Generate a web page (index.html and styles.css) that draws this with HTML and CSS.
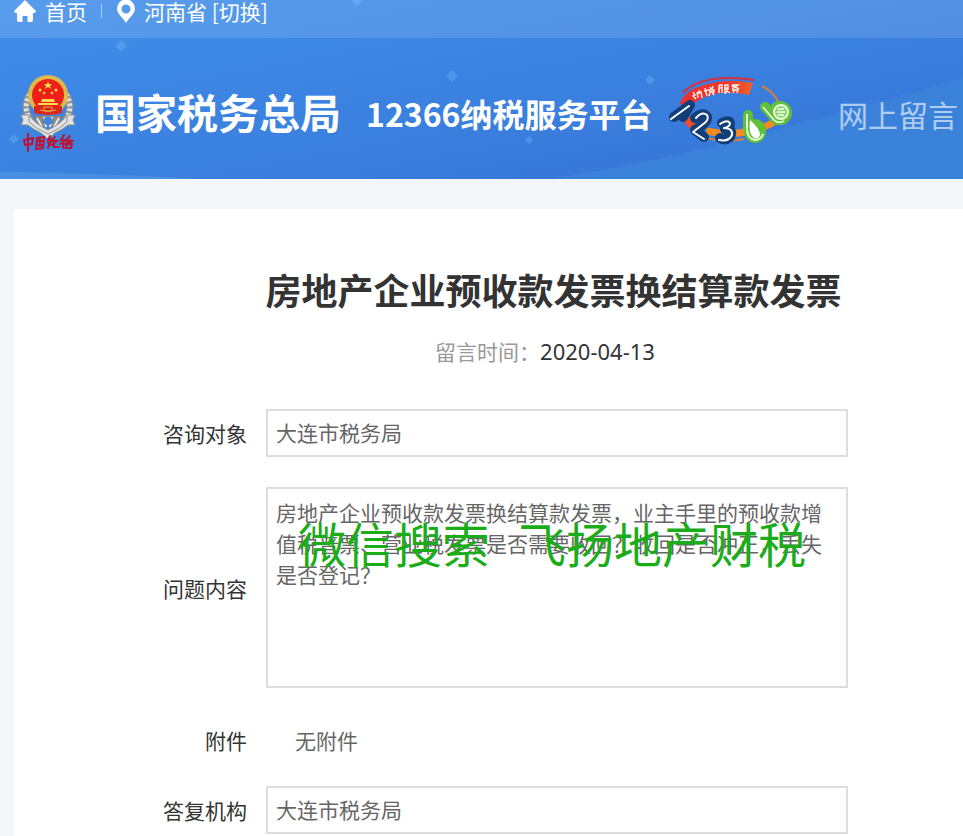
FILE: index.html
```html
<!DOCTYPE html>
<html lang="zh-CN">
<head>
  <meta charset="UTF-8">
  <meta name="viewport" content="width=device-width, initial-scale=1.0">
  <title>12366纳税服务平台 - 网上留言</title>
  <link rel="stylesheet" href="styles.css">
</head>
<body>
  <header class="header">
    <svg class="header-bg" viewBox="0 0 963 179" preserveAspectRatio="none" aria-hidden="true">
      <defs>
        <linearGradient id="sky" x1="0" y1="0" x2="1" y2="1">
          <stop offset="0" stop-color="#418fea"/>
          <stop offset="0.6" stop-color="#3a7fde"/>
          <stop offset="1" stop-color="#3470d4"/>
        </linearGradient>
      </defs>
      <rect width="963" height="179" fill="url(#sky)"/>
      <path d="M0 172 Q120 174 200 179 H0Z" fill="#4a90e2"/>
      <path d="M550 179 Q680 158 790 126 L963 78 V179Z" fill="#3a81d9"/>
      <g fill="#6cb2f5" opacity="0.4">
        <path d="M121 40l6 6-6 6-6-6z"/>
        <path d="M452 70l6 6-6 6-6-6z"/>
        <path d="M650 75l5 5-5 5-5-5z"/>
        <path d="M529 136l4 4-4 4-4-4z"/>
        <path d="M14 134l5 5-5 5-5-5z"/>
        <path d="M357 -4l5 5-5 5-5-5z"/>
      </g>
    </svg>
    <div class="topbar">
      <a class="top-link" href="#">
        <svg width="22" height="22" viewBox="0 0 22 22" fill="#fff" aria-hidden="true">
          <path d="M11 0L22 11Q22 13 20 13H19V20Q19 22 17 22H13.500V16H8.500V22H5Q3 22 3 20V13H2Q0 13 0 11Z"/>
        </svg>
        首页
      </a>
      <span class="divider"></span>
      <div class="place">
        <svg width="18" height="23" viewBox="0 0 18 23" fill="#fff" fill-rule="evenodd" aria-hidden="true">
          <path d="M9 23C7 19 0 14 0 8.500A9 9 0 0 1 18 8.500C18 14 11 19 9 23ZM9 4.500A4.500 4.500 0 1 0 9 13.500A4.500 4.500 0 1 0 9 4.500Z"/>
        </svg>
        <span>河南省 <a href="#">[切换]</a></span>
      </div>
    </div>
    <div class="banner">
      <svg class="emblem" width="56" height="78" viewBox="0 0 56 78" role="img" aria-label="中国税务">
        <g fill="none" stroke="#8f8f91" stroke-width="7">
          <path d="M10 20C1 35 9 50 22 55M46 20C55 35 47 50 34 55"/>
        </g>
        <g fill="none" stroke="#dfdedb" stroke-width="5" stroke-dasharray="3 2">
          <path d="M10 20C1 35 9 50 22 55M46 20C55 35 47 50 34 55"/>
        </g>
        <path d="M14 42h28l-5 10H19z" fill="#8c8681"/>
        <path d="M17 44l5 9M24 43l2 10M32 43l-2 10M39 44l-5 9" stroke="#eeebe6" stroke-width="2"/>
        <circle cx="28" cy="21" r="20" fill="#dfb94a"/>
        <circle cx="28" cy="21" r="16" fill="#ed2018"/>
        <path d="M14 32h28v7q-14 4-28 0z" fill="#d72a1c"/>
        <path d="M28 7l1 3h3l-2 2 1 3-3-2-3 2 1-3-2-2h3z" fill="#ffd84c"/>
        <g fill="#ffd84c">
          <circle cx="20" cy="16" r="1.500"/><circle cx="36" cy="16" r="1.500"/>
          <circle cx="24" cy="19" r="1.300"/><circle cx="32" cy="19" r="1.300"/>
          <path d="M22 25h12l1 3H21zM18 29h20v2H18z"/>
        </g>
        <path d="M20 36q8 3 16 0M24 33h8v4h-8z" fill="none" stroke="#e5a53a" stroke-width="1"/>
        <ellipse cx="28" cy="47" rx="5" ry="4" fill="#3d86dc"/>
        <path d="M1 41h8q5 8 19 15 14-7 19-15h8l-2 5 2 5h-7q-6 5-13 8l-7 6-7-6q-7-3-13-8H1l2-5z" fill="#e2e2e0" stroke="#838b93" stroke-width="1"/>
        <path d="M9 42v6q7 7 19 12 12-5 19-12v-6" fill="none" stroke="#8c9299" stroke-width="1"/>
        <g fill="none" stroke="#bd1436" stroke-width="2" stroke-linecap="round">
          <path d="M4 66l9-2-1 6-7 1zM8 60v17"/>
          <path d="M17 64l7-1-1 11-7 1zM18 67h4M20 65v7M18 71h4"/>
          <path d="M30 62l-2 4 3-1-3 9M28 69l4 2M35 63l-3 4h5l-4 3M34 67v6h5"/>
          <path d="M44 61l-3 5h5l-6 4M43 66v8M50 62l-4 4 6 1-4 2-4 1M47 70h5l-1 4-4 0M49 67l-4 7"/>
        </g>
      </svg>
      <span class="bureau">国家税务总局</span>
      <span class="platform">12366纳税服务平台</span>
      <svg class="logo" width="124" height="74" viewBox="0 0 124 74" role="img" aria-label="12366">
        <defs>
          <linearGradient id="ribbon">
            <stop offset="0" stop-color="#ee2f2c"/>
            <stop offset="0.7" stop-color="#ee3a2a"/>
            <stop offset="1" stop-color="#f0642a"/>
          </linearGradient>
        </defs>
        <path d="M15 19C27 5 55 1 86 6" fill="none" stroke="#d8303a" stroke-width="2"/>
        <path d="M12 30Q16 17 33 12 57 4 85 9l-4 12Q52 14 31 26L18 34Z" fill="url(#ribbon)"/>
        <path d="M17 33q-2 14 11 21" fill="none" stroke="#ee4a2c" stroke-width="7"/>
        <path d="M38 57q24 5 44 0 22-5 28-13" fill="none" stroke="#f58a20" stroke-width="7"/>
        <path d="M38 64q20 5 38 1M94 12q12 6 16 16" fill="none" stroke="#d98035" stroke-width="2"/>
        <g fill="none" stroke="#ffe9e2" stroke-width="1.500">
          <path d="M25 18l2 3-2 1 3 3M29 18l1 6M29 19l4-1 1 6M31 16l0 4"/>
          <path d="M37 14l2 8M36 17l4-1M42 13l1 2M45 12l-1 3M41 16h5v2h-4zM42 18l-1 4M44 18l2 3"/>
          <path d="M51 11v8M51 11h3v8M51 14h3M57 11h3v3h-3zM57 11v9M57 15h3l-2 4M59 17l3 2"/>
          <path d="M65 10l-1 3M65 11h5l-6 4M65 12l6 3M64 16h6l-1 3M67 15l-2 4"/>
        </g>
        <g fill="none" stroke-linejoin="round" stroke-linecap="round">
          <path d="M6 43l16-12-7 12M27 44q8-7 12-1 1 6-12 13l9 7M54 49q8-4 8 1 0 4-5 5 9 0 5 8-5 4-10 1" stroke="#123f79" stroke-width="10"/>
          <path d="M3 45l18-13M28 44q6-7 11-3 3 5-5 10l-9 7 11 7M52 50q7-5 10-1 0 4-6 5 9 0 8 7-3 7-13 5" stroke="#fff" stroke-width="2"/>
          <path d="M80 41v14M97 33l12 13" stroke="#62c038" stroke-width="10"/>
        </g>
        <ellipse cx="87" cy="57" rx="11" ry="12" fill="#62c038"/>
        <path d="M82 46Q91 54 92 60 91 66 86 64 80 60 82 46Z" fill="#fff"/>
        <path d="M79 40v14q0 11 8 12 6 0 8-6" fill="none" stroke="#e4ffd0" stroke-width="2"/>
        <circle cx="112" cy="39" r="12" fill="#62c038"/>
        <circle cx="113" cy="38" r="7" fill="#91d773" stroke="#e9ffdf" stroke-width="2"/>
        <path d="M110 35h6M109 38h8M110 41h6M95 33l11 13q4 4 10 1" fill="none" stroke="#f0ffe6" stroke-width="1.500"/>
      </svg>
      <a class="section" href="#">网上留言</a>
    </div>
  </header>

  <main class="card">
    <div class="heading">
      <h1>房地产企业预收款发票换结算款发票</h1>
      <p class="meta">留言时间：<time datetime="2020-04-13">2020-04-13</time></p>
    </div>
    <form>
      <div class="row">
        <label for="target">咨询对象</label>
        <input type="text" id="target" value="大连市税务局" readonly>
      </div>
      <div class="row">
        <label for="content">问题内容</label>
        <div class="content-box">
          <textarea id="content" readonly>房地产企业预收款发票换结算款发票，业主手里的预收款增值税普票、营业税发票是否需要收回？收回是否冲正，丢失是否登记？</textarea>
          <div class="watermark"><span>微信搜索</span><span>飞扬地产财税</span></div>
        </div>
      </div>
      <div class="row row-file">
        <label for="file">附件</label>
        <output id="file">无附件</output>
      </div>
      <div class="row">
        <label for="org">答复机构</label>
        <input type="text" id="org" value="大连市税务局" readonly>
      </div>
    </form>
  </main>
</body>
</html>
```
FILE: styles.css
```css
* {
  box-sizing: border-box;
}
body {
  display: flex;
  flex-direction: column;
  min-height: 100vh;
  margin: 0;
  background: #f4f6f8;
  color: #333;
  font-family: "Noto Sans CJK SC", sans-serif;
  font-size: 21px;
}
a {
  color: inherit;
  text-decoration: none;
}
.header {
  position: relative;
  color: #fff;
  overflow: hidden;
}
.header-bg {
  position: absolute;
  inset: 0;
  width: 100%;
  height: 100%;
}
.topbar {
  position: relative;
  display: flex;
  align-items: center;
  height: 38px;
  padding: 0 14px 16px;
  background: rgba(255, 255, 255, 0.12);
  line-height: 22px;
  white-space: nowrap;
}
.top-link,
.place {
  display: flex;
  align-items: center;
  gap: 9px;
}
.divider {
  width: 1px;
  height: 14px;
  margin: 0 15px 0 14px;
  background: rgba(255, 255, 255, 0.5);
}
/* Logo strip */
.banner {
  position: relative;
  display: flex;
  align-items: center;
  height: 141px;
  padding: 0 5px 0 20px;
  font-weight: bold;
  white-space: nowrap;
}
.emblem,
.logo {
  flex: none;
}
.emblem {
  margin-top: 8px;
}
.bureau {
  margin-left: 19px;
  padding-top: 4px;
  font-size: 41px;
}
.platform {
  margin-left: 25px;
  padding-top: 8px;
  font-size: 32px;
}
.logo {
  margin: 4px 0 0 16px;
}
.section {
  margin-left: auto;
  padding-top: 10px;
  font-size: 30px;
  font-weight: normal;
  opacity: 0.6;
}
/* Message card */
.card {
  flex: 1;
  margin: 30px 0 0 14px;
  background: #fff;
}
.heading {
  padding: 54px 0 0 130px;
  text-align: center;
}
h1 {
  margin: 0;
  font-size: 36px;
  line-height: 52px;
}
.meta {
  margin: 20px 0 42px;
  color: #999;
  line-height: 32px;
}
.meta time {
  margin-right: 17px;
  color: #333;
  font-family: "Noto Sans", sans-serif;
  font-size: 22px;
}
form {
  padding-right: 115px;
}
.row {
  display: grid;
  grid-template-columns: 233px 1fr;
  align-items: center;
  gap: 19px;
  margin-bottom: 30px;
}
.row:last-child {
  margin-bottom: 0;
}
.row label {
  text-align: right;
}
input,
textarea {
  display: block;
  width: 100%;
  height: 48px;
  padding: 0 8px 2px;
  border: 2px solid #ddd;
  border-radius: 0;
  outline: none;
  background: #fff;
  color: #666;
  font: inherit;
}
textarea {
  height: 201px;
  padding: 8px;
  line-height: 31px;
  resize: none;
}
.content-box {
  position: relative;
}
.watermark {
  position: absolute;
  top: 20px;
  left: 32px;
  display: flex;
  gap: 28px;
  color: #1aad19;
  font-size: 48px;
  line-height: 70px;
  white-space: nowrap;
  pointer-events: none;
}
.row-file {
  margin: -2px 0 22px;
}
.row-file output {
  padding-left: 29px;
  color: #666;
  line-height: 48px;
}
```
